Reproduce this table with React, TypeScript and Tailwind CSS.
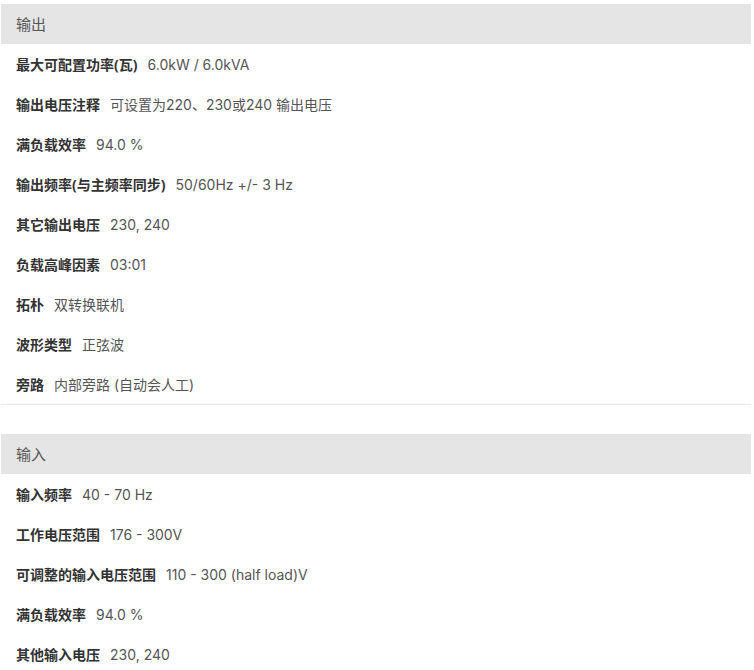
const sections = [
  {
    title: "输出",
    rows: [
      ["最大可配置功率(瓦)", "6.0kW / 6.0kVA"],
      ["输出电压注释", "可设置为220、230或240 输出电压"],
      ["满负载效率", "94.0 %"],
      ["输出频率(与主频率同步)", "50/60Hz +/- 3 Hz"],
      ["其它输出电压", "230, 240"],
      ["负载高峰因素", "03:01"],
      ["拓朴", "双转换联机"],
      ["波形类型", "正弦波"],
      ["旁路", "内部旁路 (自动会人工)"],
    ],
  },
  {
    title: "输入",
    rows: [
      ["输入频率", "40 - 70 Hz"],
      ["工作电压范围", "176 - 300V"],
      ["可调整的输入电压范围", "110 - 300 (half load)V"],
      ["满负载效率", "94.0 %"],
      ["其他输入电压", "230, 240"],
    ],
  },
];

export default function App() {
  return (
    <div className="min-h-screen bg-white pt-1 pl-px pr-[3px] font-['Open_Sans','Noto_Sans_CJK_SC',sans-serif]">
      {sections.map((section) => (
        <section key={section.title} className="mb-[29px] border-b border-[#e5e5e5]">
          <h3 className="h-10 bg-[#e5e5e5] pl-[15px] flex items-center text-[15px] font-normal text-[#555]">
            {section.title}
          </h3>
          {section.rows.map(([label, value]) => (
            <div key={label} className="h-10 pl-[15px] flex items-center text-[14px]">
              <span className="font-bold text-[#333]">{label}</span>
              <span className="ml-[10px] text-[#555] font-['Inter','Noto_Sans_CJK_SC',sans-serif]">
                {value}
              </span>
            </div>
          ))}
        </section>
      ))}
    </div>
  );
}
